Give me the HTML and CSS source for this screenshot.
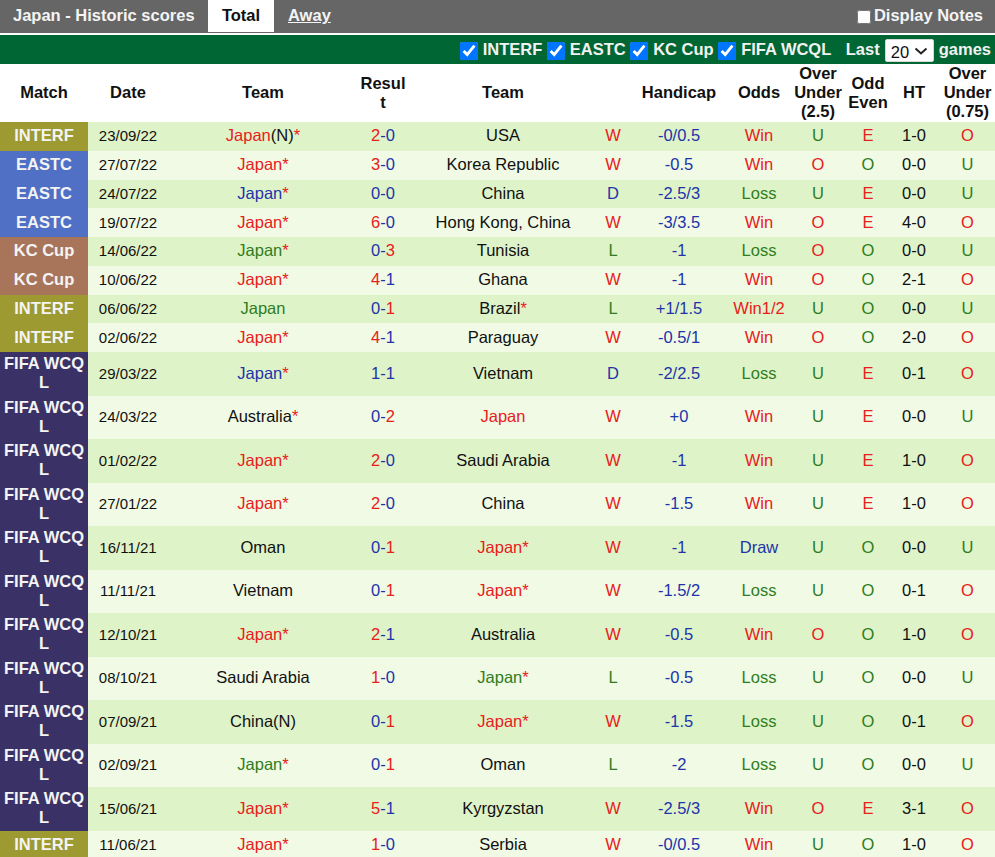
FILE: index.html
```html
<!DOCTYPE html>
<html lang="en">
<head>
<meta charset="utf-8">
<title>Japan - Historic scores</title>
<link rel="stylesheet" href="styles.css">
</head>
<body>
<div class="topbar">
  <span class="title">Japan - Historic scores</span>
  <a class="tab active">Total</a>
  <a class="tab away">Away</a>
  <label class="notes"><input type="checkbox" class="notes-check">Display Notes</label>
</div>
<div class="filters">
  <label class="filter"><input type="checkbox" checked>INTERF</label>
  <label class="filter"><input type="checkbox" checked>EASTC</label>
  <label class="filter"><input type="checkbox" checked>KC Cup</label>
  <label class="filter"><input type="checkbox" checked>FIFA WCQL</label>
  <span class="last">Last <select class="count"><option>20</option></select> games</span>
</div>
<table>
  <colgroup>
    <col class="c-match"><col class="c-date"><col class="c-team"><col class="c-res"><col class="c-team2"><col class="c-wl"><col class="c-hc"><col class="c-odds"><col class="c-ou"><col class="c-oe"><col class="c-ht"><col class="c-ou2">
  </colgroup>
  <thead>
    <tr><th>Match</th><th>Date</th><th>Team</th><th>Result</th><th>Team</th><th></th><th>Handicap</th><th>Odds</th><th>Over Under (2.5)</th><th>Odd Even</th><th>HT</th><th>Over Under (0.75)</th></tr>
  </thead>
  <tbody>
    <tr class="one"><td class="m interf">INTERF</td><td class="d">23/09/22</td><td><span class="r">Japan</span>(N)<span class="r">*</span></td><td><span class="r">2</span><span class="b">-0</span></td><td>USA</td><td class="r">W</td><td class="b">-0/0.5</td><td class="r">Win</td><td class="g">U</td><td class="r">E</td><td>1-0</td><td class="r">O</td></tr>
    <tr class="one"><td class="m eastc">EASTC</td><td class="d">27/07/22</td><td><span class="r">Japan*</span></td><td><span class="r">3</span><span class="b">-0</span></td><td>Korea Republic</td><td class="r">W</td><td class="b">-0.5</td><td class="r">Win</td><td class="r">O</td><td class="g">O</td><td>0-0</td><td class="g">U</td></tr>
    <tr class="one"><td class="m eastc">EASTC</td><td class="d">24/07/22</td><td><span class="b">Japan</span><span class="r">*</span></td><td><span class="b">0-0</span></td><td>China</td><td class="b">D</td><td class="b">-2.5/3</td><td class="g">Loss</td><td class="g">U</td><td class="r">E</td><td>0-0</td><td class="g">U</td></tr>
    <tr class="one"><td class="m eastc">EASTC</td><td class="d">19/07/22</td><td><span class="r">Japan*</span></td><td><span class="r">6</span><span class="b">-0</span></td><td>Hong Kong, China</td><td class="r">W</td><td class="b">-3/3.5</td><td class="r">Win</td><td class="r">O</td><td class="r">E</td><td>4-0</td><td class="r">O</td></tr>
    <tr class="one"><td class="m kc">KC Cup</td><td class="d">14/06/22</td><td><span class="g">Japan</span><span class="r">*</span></td><td><span class="b">0-</span><span class="r">3</span></td><td>Tunisia</td><td class="g">L</td><td class="b">-1</td><td class="g">Loss</td><td class="r">O</td><td class="g">O</td><td>0-0</td><td class="g">U</td></tr>
    <tr class="one"><td class="m kc">KC Cup</td><td class="d">10/06/22</td><td><span class="r">Japan*</span></td><td><span class="r">4</span><span class="b">-1</span></td><td>Ghana</td><td class="r">W</td><td class="b">-1</td><td class="r">Win</td><td class="r">O</td><td class="g">O</td><td>2-1</td><td class="r">O</td></tr>
    <tr class="one"><td class="m interf">INTERF</td><td class="d">06/06/22</td><td><span class="g">Japan</span></td><td><span class="b">0-</span><span class="r">1</span></td><td>Brazil<span class="r">*</span></td><td class="g">L</td><td class="b">+1/1.5</td><td class="r">Win1/2</td><td class="g">U</td><td class="g">O</td><td>0-0</td><td class="g">U</td></tr>
    <tr class="one"><td class="m interf">INTERF</td><td class="d">02/06/22</td><td><span class="r">Japan*</span></td><td><span class="r">4</span><span class="b">-1</span></td><td>Paraguay</td><td class="r">W</td><td class="b">-0.5/1</td><td class="r">Win</td><td class="r">O</td><td class="g">O</td><td>2-0</td><td class="r">O</td></tr>
    <tr class="two"><td class="m wcq">FIFA WCQL</td><td class="d">29/03/22</td><td><span class="b">Japan</span><span class="r">*</span></td><td><span class="b">1-1</span></td><td>Vietnam</td><td class="b">D</td><td class="b">-2/2.5</td><td class="g">Loss</td><td class="g">U</td><td class="r">E</td><td>0-1</td><td class="r">O</td></tr>
    <tr class="two"><td class="m wcq">FIFA WCQL</td><td class="d">24/03/22</td><td>Australia<span class="r">*</span></td><td><span class="b">0-</span><span class="r">2</span></td><td><span class="r">Japan</span></td><td class="r">W</td><td class="b">+0</td><td class="r">Win</td><td class="g">U</td><td class="r">E</td><td>0-0</td><td class="g">U</td></tr>
    <tr class="two"><td class="m wcq">FIFA WCQL</td><td class="d">01/02/22</td><td><span class="r">Japan*</span></td><td><span class="r">2</span><span class="b">-0</span></td><td>Saudi Arabia</td><td class="r">W</td><td class="b">-1</td><td class="r">Win</td><td class="g">U</td><td class="r">E</td><td>1-0</td><td class="r">O</td></tr>
    <tr class="two"><td class="m wcq">FIFA WCQL</td><td class="d">27/01/22</td><td><span class="r">Japan*</span></td><td><span class="r">2</span><span class="b">-0</span></td><td>China</td><td class="r">W</td><td class="b">-1.5</td><td class="r">Win</td><td class="g">U</td><td class="r">E</td><td>1-0</td><td class="r">O</td></tr>
    <tr class="two"><td class="m wcq">FIFA WCQL</td><td class="d">16/11/21</td><td>Oman</td><td><span class="b">0-</span><span class="r">1</span></td><td><span class="r">Japan*</span></td><td class="r">W</td><td class="b">-1</td><td class="b">Draw</td><td class="g">U</td><td class="g">O</td><td>0-0</td><td class="g">U</td></tr>
    <tr class="two"><td class="m wcq">FIFA WCQL</td><td class="d">11/11/21</td><td>Vietnam</td><td><span class="b">0-</span><span class="r">1</span></td><td><span class="r">Japan*</span></td><td class="r">W</td><td class="b">-1.5/2</td><td class="g">Loss</td><td class="g">U</td><td class="g">O</td><td>0-1</td><td class="r">O</td></tr>
    <tr class="two"><td class="m wcq">FIFA WCQL</td><td class="d">12/10/21</td><td><span class="r">Japan*</span></td><td><span class="r">2</span><span class="b">-1</span></td><td>Australia</td><td class="r">W</td><td class="b">-0.5</td><td class="r">Win</td><td class="r">O</td><td class="g">O</td><td>1-0</td><td class="r">O</td></tr>
    <tr class="two"><td class="m wcq">FIFA WCQL</td><td class="d">08/10/21</td><td>Saudi Arabia</td><td><span class="r">1</span><span class="b">-0</span></td><td><span class="g">Japan</span><span class="r">*</span></td><td class="g">L</td><td class="b">-0.5</td><td class="g">Loss</td><td class="g">U</td><td class="g">O</td><td>0-0</td><td class="g">U</td></tr>
    <tr class="two"><td class="m wcq">FIFA WCQL</td><td class="d">07/09/21</td><td>China(N)</td><td><span class="b">0-</span><span class="r">1</span></td><td><span class="r">Japan*</span></td><td class="r">W</td><td class="b">-1.5</td><td class="g">Loss</td><td class="g">U</td><td class="g">O</td><td>0-1</td><td class="r">O</td></tr>
    <tr class="two"><td class="m wcq">FIFA WCQL</td><td class="d">02/09/21</td><td><span class="g">Japan</span><span class="r">*</span></td><td><span class="b">0-</span><span class="r">1</span></td><td>Oman</td><td class="g">L</td><td class="b">-2</td><td class="g">Loss</td><td class="g">U</td><td class="g">O</td><td>0-0</td><td class="g">U</td></tr>
    <tr class="two"><td class="m wcq">FIFA WCQL</td><td class="d">15/06/21</td><td><span class="r">Japan*</span></td><td><span class="r">5</span><span class="b">-1</span></td><td>Kyrgyzstan</td><td class="r">W</td><td class="b">-2.5/3</td><td class="r">Win</td><td class="r">O</td><td class="r">E</td><td>3-1</td><td class="r">O</td></tr>
    <tr class="one"><td class="m interf">INTERF</td><td class="d">11/06/21</td><td><span class="r">Japan*</span></td><td><span class="r">1</span><span class="b">-0</span></td><td>Serbia</td><td class="r">W</td><td class="b">-0/0.5</td><td class="r">Win</td><td class="g">U</td><td class="g">O</td><td>1-0</td><td class="r">O</td></tr>
  </tbody>
</table>
</body>
</html>
```
FILE: styles.css
```css
* { box-sizing: border-box; }
html, body { margin: 0; padding: 0; }
body {
  width: 995px;
  height: 857px;
  overflow: hidden;
  background: #fff;
  color: #111;
  font-family: "Liberation Sans", Arial, sans-serif;
  font-size: 16.5px;
}
.topbar {
  display: flex;
  align-items: flex-start;
  height: 33px;
  background: #666;
  color: #f4f4f4;
  font-weight: 700;
  line-height: 31px;
}
.title { width: 208px; padding-left: 13px; }
.tab { display: block; height: 32px; }
.tab.active { width: 66px; background: #fff; color: #111; text-align: center; }
.tab.away { margin-left: 14px; text-decoration: underline; }
.notes { display: flex; align-items: center; height: 31px; margin-left: auto; padding-right: 12px; }
.notes-check { width: 14px; height: 14px; margin: 2px 3px 0 0; }
.filters {
  display: flex;
  align-items: center;
  justify-content: flex-end;
  height: 29px;
  margin-top: 2px;
  padding-right: 4px;
  background: #006633;
  color: #f2f2f2;
  font-weight: 700;
}
.filter { display: flex; align-items: center; margin-right: 4.5px; }
.filter input { width: 18px; height: 18px; margin: 2px 5px 0 0; accent-color: #0075ff; }
.last { display: flex; align-items: center; margin-left: 10px; gap: 5px; }
.count {
  appearance: none;
  width: 49px;
  height: 23px;
  margin-top: 2px;
  padding: 2px 0 0 5px;
  border: 1px solid #d8d8d8;
  border-radius: 2px;
  background: #fff url("data:image/svg+xml,%3Csvg xmlns='http://www.w3.org/2000/svg' width='14' height='8'%3E%3Cpath d='M1.5 1.5 7 6.5l5.5-5' fill='none' stroke='%23222' stroke-width='2'/%3E%3C/svg%3E") no-repeat right 5px center;
  color: #111;
  font-family: inherit;
  font-size: 16.5px;
}
table {
  width: 995px;
  border-collapse: collapse;
  table-layout: fixed;
  line-height: 19px;
}
.c-match { width: 88px; }
.c-date { width: 80px; }
.c-team { width: 190px; }
.c-res { width: 50px; }
.c-team2 { width: 190px; }
.c-wl { width: 30px; }
.c-hc { width: 102px; }
.c-odds { width: 58px; }
.c-ou { width: 60px; }
.c-oe { width: 40px; }
.c-ht { width: 52px; }
.c-ou2 { width: 55px; }
th {
  height: 58px;
  padding: 0 0 1px;
  font-weight: 700;
  text-align: center;
  word-break: break-word;
  background: #fff;
}
td { padding: 0 0 1px; text-align: center; }
tr.one { height: 28.75px; }
tr.two { height: 43.5px; }
tbody tr:nth-child(odd) { background: #dff3c9; }
tbody tr:nth-child(even) { background: #f0fae5; }
td.m { padding: 0 2px 1px; color: #f4f4f4; font-weight: 700; word-break: break-all; }
td.d { font-size: 15px; }
.interf { background: #9c9a31; }
.eastc { background: #5070c6; }
.kc { background: #a8745a; }
.wcq { background: #3a3166; }
.r { color: #e8201c; }
.b { color: #2133aa; }
.g { color: #2f7d20; }
```
